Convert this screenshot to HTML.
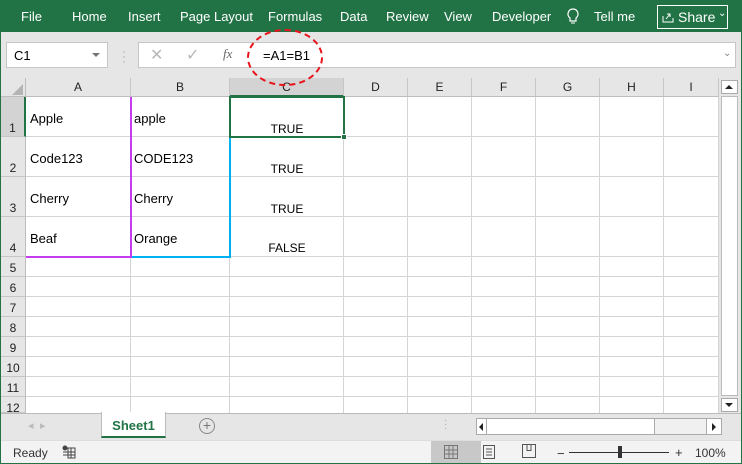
<!DOCTYPE html>
<html><head><meta charset="utf-8"><style>
*{margin:0;padding:0;box-sizing:border-box}
body{width:742px;height:464px;overflow:hidden;font-family:"Liberation Sans",sans-serif;background:#e6e6e6;position:relative}
.a{position:absolute}
.rib{left:0;top:0;width:742px;height:32px;background:#217346;color:#fff;font-size:13px}
.rib span{position:absolute;top:9px}
.cell{font-size:13px;color:#000;position:absolute}
.ch{position:absolute;top:78px;height:19px;font-size:12px;text-align:center;line-height:19px;border-right:1px solid #c6c6c6;color:#222;background:#e6e6e6;border-bottom:1px solid #bdbdbd}
.rh{position:absolute;left:1px;width:25px;font-size:12px;text-align:center;border-bottom:1px solid #c6c6c6;background:#e6e6e6;color:#222;border-right:1px solid #bdbdbd}
.vl{position:absolute;top:97px;width:1px;height:316px;background:#d4d4d4}
.hl{position:absolute;left:26px;width:693px;height:1px;background:#d4d4d4}
</style></head><body>
<div class="a" style="left:0;top:0;width:742px;height:464px;border-left:1px solid #217346;border-right:1px solid #217346;border-bottom:1px solid #217346;z-index:10;pointer-events:none"></div>
<div class="a rib">
<span style="left:21px">File</span><span style="left:72px">Home</span><span style="left:128px">Insert</span><span style="left:180px">Page Layout</span><span style="left:268px">Formulas</span><span style="left:340px">Data</span><span style="left:386px">Review</span><span style="left:444px">View</span><span style="left:492px">Developer</span>
<svg class="a" style="left:566px;top:8px" width="14" height="18" viewBox="0 0 14 18"><path d="M7 1a5 5 0 0 0-3 9v3h6v-3a5 5 0 0 0-3-9z" fill="none" stroke="#fff" stroke-width="1.2"/><path d="M5 15h4" stroke="#fff"/></svg>
<span style="left:594px">Tell me</span>
<div class="a" style="left:657px;top:5px;width:71px;height:24px;border:1px solid #fff"></div>
<svg class="a" style="left:662px;top:11px" width="13" height="12"><path d="M1 5v6h10V7M4 8l4-5M5 3h3v3" fill="none" stroke="#fff"/></svg>
<span style="left:678px;font-size:14px;top:9px">Share</span><span style="left:718px;top:8px;font-size:10px">⌄</span>
</div>
<div class="a" style="left:6px;top:42px;width:102px;height:26px;background:#fff;border:1px solid #c6c6c6;font-size:13px;padding:5px 0 0 7px">C1</div>
<div class="a" style="left:92px;top:53px;width:0;height:0;border-left:4px solid transparent;border-right:4px solid transparent;border-top:4px solid #777"></div>
<div class="a" style="left:122px;top:49px;color:#aaa;font-size:12px;line-height:5px">·<br>·<br>·</div>
<div class="a" style="left:138px;top:42px;width:598px;height:26px;background:#fff;border:1px solid #c6c6c6"></div>
<div class="a" style="left:150px;top:45px;color:#b8b8b8;font-size:16px">✕</div>
<div class="a" style="left:186px;top:45px;color:#b8b8b8;font-size:16px">✓</div>
<div class="a" style="left:223px;top:46px;color:#666;font-size:13px;font-family:'Liberation Serif',serif;font-style:italic">fx</div>
<div class="a" style="left:263px;top:48px;font-size:13px">=A1=B1</div>
<div class="a" style="left:723px;top:48px;color:#888;font-size:10px">⌄</div>
<div class="a" style="left:247px;top:29px;width:76px;height:57px;border:2px dashed #e8131b;border-radius:50%;z-index:5"></div>
<div class="a" style="left:26px;top:97px;width:693px;height:316px;background:#fff"></div>
<div class="a" style="left:1px;top:78px;width:25px;height:19px;background:#e6e6e6;border-right:1px solid #bdbdbd;border-bottom:1px solid #bdbdbd"></div>
<div class="a" style="left:12px;top:84px;width:0;height:0;border-left:11px solid transparent;border-bottom:11px solid #b4b4b4"></div>
<div class="ch" style="left:26px;width:105px">A</div>
<div class="ch" style="left:131px;width:99px">B</div>
<div class="ch" style="left:230px;width:114px;background:#d3d3d3;border-bottom:2px solid #217346">C</div>
<div class="ch" style="left:344px;width:64px">D</div>
<div class="ch" style="left:408px;width:64px">E</div>
<div class="ch" style="left:472px;width:64px">F</div>
<div class="ch" style="left:536px;width:64px">G</div>
<div class="ch" style="left:600px;width:64px">H</div>
<div class="ch" style="left:664px;width:55px">I</div>
<div class="vl" style="left:130px"></div><div class="vl" style="left:229px"></div><div class="vl" style="left:343px"></div><div class="vl" style="left:407px"></div><div class="vl" style="left:471px"></div><div class="vl" style="left:535px"></div><div class="vl" style="left:599px"></div><div class="vl" style="left:663px"></div><div class="vl" style="left:718px"></div>
<div class="hl" style="top:136px"></div><div class="hl" style="top:176px"></div><div class="hl" style="top:216px"></div><div class="hl" style="top:256px"></div><div class="hl" style="top:276px"></div><div class="hl" style="top:296px"></div><div class="hl" style="top:316px"></div><div class="hl" style="top:336px"></div><div class="hl" style="top:356px"></div><div class="hl" style="top:376px"></div><div class="hl" style="top:396px"></div>
<div class="rh" style="top:97px;height:40px;padding-top:24px;background:#d3d3d3;border-right:2px solid #217346">1</div>
<div class="rh" style="top:137px;height:40px;padding-top:24px">2</div>
<div class="rh" style="top:177px;height:40px;padding-top:24px">3</div>
<div class="rh" style="top:217px;height:40px;padding-top:24px">4</div>
<div class="rh" style="top:257px;height:20px;padding-top:4px">5</div>
<div class="rh" style="top:277px;height:20px;padding-top:4px">6</div>
<div class="rh" style="top:297px;height:20px;padding-top:4px">7</div>
<div class="rh" style="top:317px;height:20px;padding-top:4px">8</div>
<div class="rh" style="top:337px;height:20px;padding-top:4px">9</div>
<div class="rh" style="top:357px;height:20px;padding-top:4px">10</div>
<div class="rh" style="top:377px;height:20px;padding-top:4px">11</div>
<div class="rh" style="top:397px;height:16px;padding-top:4px;overflow:hidden">12</div>
<div class="cell" style="left:30px;top:111px">Apple</div><div class="cell" style="left:134px;top:111px">apple</div>
<div class="cell" style="left:30px;top:151px">Code123</div><div class="cell" style="left:134px;top:151px">CODE123</div>
<div class="cell" style="left:30px;top:191px">Cherry</div><div class="cell" style="left:134px;top:191px">Cherry</div>
<div class="cell" style="left:30px;top:231px">Beaf</div><div class="cell" style="left:134px;top:231px">Orange</div>
<div class="cell" style="left:230px;width:114px;text-align:center;top:122px;font-size:12px">TRUE</div>
<div class="cell" style="left:230px;width:114px;text-align:center;top:162px;font-size:12px">TRUE</div>
<div class="cell" style="left:230px;width:114px;text-align:center;top:202px;font-size:12px">TRUE</div>
<div class="cell" style="left:230px;width:114px;text-align:center;top:241px;font-size:12px">FALSE</div>
<div class="a" style="left:130px;top:97px;width:2px;height:161px;background:#c53cf0"></div>
<div class="a" style="left:26px;top:256px;width:106px;height:2px;background:#c53cf0"></div>
<div class="a" style="left:132px;top:256px;width:99px;height:2px;background:#00b0f0"></div>
<div class="a" style="left:229px;top:137px;width:2px;height:121px;background:#00b0f0"></div>
<div class="a" style="left:229px;top:96px;width:116px;height:42px;border:2px solid #217346"></div>
<div class="a" style="left:341px;top:134px;width:6px;height:6px;background:#217346;border:1px solid #fff"></div>
<div class="a" style="left:720px;top:78px;width:20px;height:335px;background:#e6e6e6"></div>
<div class="a" style="left:721px;top:80px;width:17px;height:14px;background:#fff;border:1px solid #aaa"></div>
<div class="a" style="left:725px;top:85px;border-left:4px solid transparent;border-right:4px solid transparent;border-bottom:4px solid #222"></div>
<div class="a" style="left:721px;top:96px;width:17px;height:300px;background:#fff;border:1px solid #bbb"></div>
<div class="a" style="left:721px;top:398px;width:17px;height:14px;background:#fff;border:1px solid #aaa"></div>
<div class="a" style="left:725px;top:403px;border-left:4px solid transparent;border-right:4px solid transparent;border-top:4px solid #222"></div>
<div class="a" style="left:1px;top:413px;width:740px;height:27px;background:#e6e6e6;border-top:1px solid #bbb"></div>
<div class="a" style="left:28px;top:419px;color:#bbb;font-size:11px">◂</div>
<div class="a" style="left:40px;top:419px;color:#bbb;font-size:11px">▸</div>
<div class="a" style="left:101px;top:412px;width:65px;height:26px;background:#fff;border:1px solid #bbb;border-top:none;border-bottom:2px solid #217346;color:#217346;font-weight:bold;font-size:13px;text-align:center;padding-top:6px">Sheet1</div>
<div class="a" style="left:199px;top:418px;width:16px;height:16px;border:1px solid #888;border-radius:50%;color:#777;font-size:14px;text-align:center;line-height:13px">+</div>
<div class="a" style="left:444px;top:419px;color:#aaa;font-size:10px;line-height:4px">·<br>·<br>·</div>
<div class="a" style="left:476px;top:418px;width:246px;height:17px;background:#f0f0f0;border:1px solid #aaa"></div>
<div class="a" style="left:477px;top:419px;width:10px;height:15px;background:#fff;border-right:1px solid #aaa"></div>
<div class="a" style="left:479px;top:423px;border-top:4px solid transparent;border-bottom:4px solid transparent;border-right:4px solid #222"></div>
<div class="a" style="left:487px;top:419px;width:168px;height:15px;background:#fff;border-right:1px solid #aaa"></div>
<div class="a" style="left:706px;top:418px;width:16px;height:17px;background:#fff;border:1px solid #aaa"></div>
<div class="a" style="left:712px;top:423px;border-top:4px solid transparent;border-bottom:4px solid transparent;border-left:4px solid #222"></div>
<div class="a" style="left:1px;top:440px;width:740px;height:24px;background:#f3f3f3;border-top:1px solid #ddd"></div>
<div class="a" style="left:13px;top:446px;font-size:12px;color:#333">Ready</div>
<svg class="a" style="left:62px;top:445px" width="14" height="14"><circle cx="3" cy="3" r="2.5" fill="#444"/><rect x="6" y="3" width="7" height="10" fill="none" stroke="#444"/><path d="M1 7h12M1 10h12M9 3v10" stroke="#444"/></svg>
<div class="a" style="left:431px;top:441px;width:50px;height:23px;background:#c8c8c8"></div>
<svg class="a" style="left:444px;top:445px" width="14" height="14"><path d="M.5.5h13v13H.5zM5 .5v13M9 .5v13M.5 5h13M.5 9h13" fill="none" stroke="#777"/></svg>
<svg class="a" style="left:483px;top:445px" width="12" height="14"><path d="M.5.5h11v13H.5zM3 4h6M3 7h6M3 10h6" fill="none" stroke="#555"/></svg>
<svg class="a" style="left:522px;top:444px" width="14" height="14"><path d="M.5.5h13v13H.5zM5 .5v6h4V.5" fill="none" stroke="#555"/></svg>
<div class="a" style="left:557px;top:446px;font-size:13px;color:#333">−</div>
<div class="a" style="left:569px;top:452px;width:100px;height:1px;background:#333"></div>
<div class="a" style="left:618px;top:446px;width:4px;height:12px;background:#333"></div>
<div class="a" style="left:675px;top:445px;font-size:13px;color:#333">+</div>
<div class="a" style="left:695px;top:446px;font-size:12px;color:#333">100%</div>
</body></html>
